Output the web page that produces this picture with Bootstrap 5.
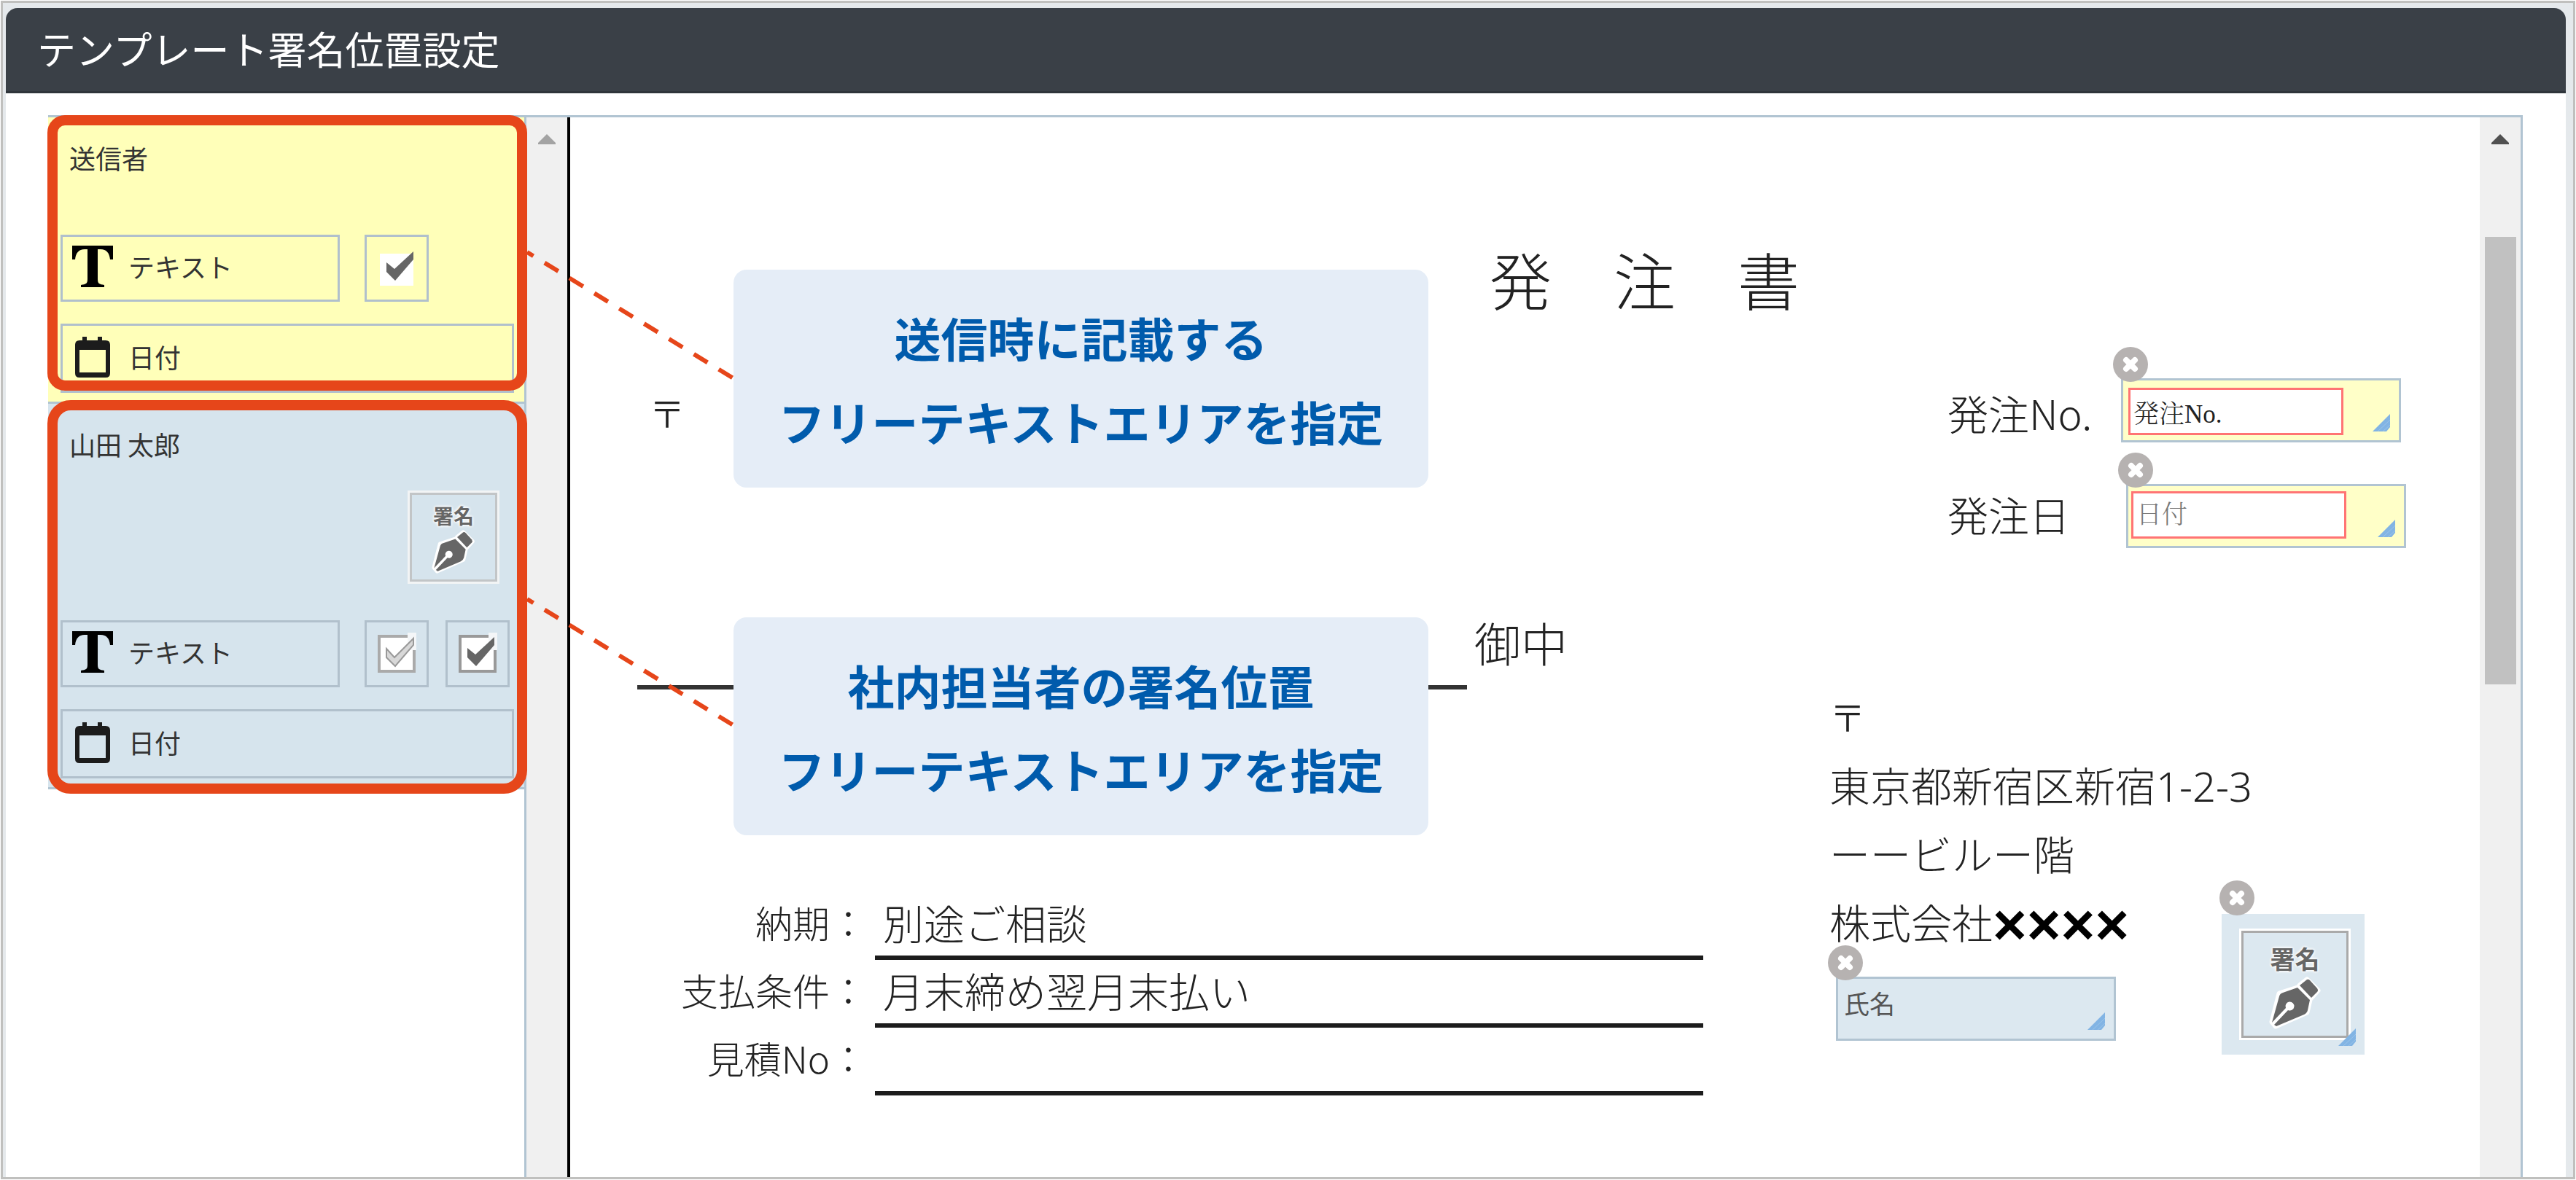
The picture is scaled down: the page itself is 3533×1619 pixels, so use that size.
<!DOCTYPE html>
<html lang="ja">
<head>
<meta charset="utf-8">
<meta name="viewport" content="width=device-width, initial-scale=1">
<title>テンプレート署名位置設定</title>
<link rel="stylesheet" href="https://cdn.jsdelivr.net/npm/bootstrap@5.3.0/dist/css/bootstrap.min.css">
<style>
  body { font-family: "Noto Sans CJK JP", sans-serif; padding: 1px; background: #fff; color: #333; }
  .app-frame { border: 3px solid #c0c0be; background: #e5e9ec; padding: 7px 10px 0 4px; }
  .app-title { background: #3a4047; border-bottom: 3px solid #2f353b; border-radius: 16px 16px 0 0; height: 117px; padding: 0 43px 4px; }
  .app-title h1 { font-size: 53px; line-height: 80px; color: #fff; }
  .app-main { background: #fff; padding: 30px 59px 0 58px; }
  .workspace { border-top: 3px solid #b1c4d2; border-right: 3px solid #b1c4d2; }

  /* palette */
  .palette { width: 716px; border-right: 4px solid #000; }
  .palette-list { border-right: 3px solid #b1c4d2; }
  .signer { padding: 28px 14px 12px 17px; border-bottom: 3px solid #b1c4d2; }
  .signer h2 { font-size: 36px; line-height: 54px; padding-left: 12px; }
  .signer-send { background: #ffffb9; }
  .signer-staff { background: #d6e4ed; }
  .tile { border: 3px solid #b1c0cc; background: transparent; color: #333; font-size: 36px; line-height: 54px; padding: 0 12px 6px; height: 92px; }
  .tile svg { width: 58px; height: 60px; margin-right: 20px; }
  .tile-text { width: 383px; }
  .tile-date { height: 95px; }
  .tile-check { width: 88px; padding: 0; }
  .tile-check svg { width: 54px; height: 58px; margin: 0; }
  .tiles-send { margin-top: 79px; }
  .tiles-staff { margin-top: 50px; }
  .tiles-gap { gap: 34px; }
  .checks-gap { gap: 23px; }
  .date-gap { margin-top: 30px; }
  .sign-tile { width: 126px; height: 128px; border: 3px solid #f2f4f5; outline: 3px solid #c2c5c7; outline-offset: -6px; background: transparent; color: #666; font-size: 28px; line-height: 40px; font-weight: 700; padding: 0; margin: 37px 20px 0 0; text-shadow: 0 0 4px #fff, 0 0 4px #fff, 0 0 3px #fff; }
  .sign-tile svg { width: 60px; height: 60px; }

  /* scroll bars */
  .track { background: #f0f0f0; }
  .track-doc { width: 56px; }
  .track button { border: 0; background: transparent; padding: 23px 0 0; line-height: 14px; height: 37px; }
  .track svg { display: block; width: 26px; height: 14px; }
  .thumb { width: 43px; height: 614px; margin-top: 127px; background: #c1c1c1; }

  /* order form */
  .sheet { padding-top: 157px; font-weight: 300; color: #222; }
  .sheet h2 { font-size: 85px; line-height: 128px; font-weight: 300; margin: 0 0 50px 1261px; }
  .sheet-left { padding-left: 92px; }
  .sheet-right { width: 892px; font-size: 56px; line-height: 94px; }
  .postal { font-size: 50px; line-height: 139px; padding-left: 16px; }
  .order-rows { line-height: 139px; padding-left: 162px; }
  .addressee { gap: 10px; margin-top: 191px; font-size: 64px; line-height: 108px; height: 120px; }
  .addressee-line { width: 1138px; border-bottom: 6px solid #333; }
  .terms { margin-top: 278px; border-collapse: separate; border-spacing: 0; }
  .terms th { width: 326px; height: 93px; padding: 0 11px 11px 0; font-size: 51px; font-weight: 300; line-height: 80px; text-align: right; }
  .terms td { width: 1136px; padding: 0 11px 5px; font-size: 56px; line-height: 80px; border-bottom: 6px solid #1c1c1c; }
  .address { margin-top: 161px; }
  .address .mark-sign { font-size: 50px; }
  .latin { font-family: "Noto Sans", sans-serif; line-height: 60px; }
  .cross { font-family: "Liberation Sans", sans-serif; font-size: 80px; line-height: 40px; font-weight: 700; color: #000; vertical-align: -8px; }

  /* fields dropped on the form */
  .field { position: absolute; width: 384px; height: 88px; border: 3px solid #b1c4d2; }
  .field-send { background: #ffffc8; }
  .field-staff { background: #dce8f0; }
  .field input { width: 295px; height: 65px; border: 3px solid #ff7474; border-radius: 0; padding: 0 4px; font-family: "Liberation Serif", "Noto Serif CJK JP", "Noto Sans CJK JP", serif; font-size: 35px; font-weight: 300; color: #222; background: #fff; }
  .field input::placeholder { color: #777; opacity: 1; }
  .field .plain { width: 340px; height: 64px; border: 0; background: transparent; font-family: "Noto Sans CJK JP", sans-serif; font-weight: 400; color: #555; }
  .field .close-dot { position: absolute; left: -14px; top: -46px; }
  .close-dot { width: 48px; height: 48px; border: 0; background: transparent; padding: 0; line-height: 0; }
  .close-dot svg { width: 48px; height: 48px; }
  .grip { position: absolute; right: 12px; bottom: 12px; width: 24px; height: 24px; }
  .field-no { left: 2127px; top: 358px; padding: 10px 0 0 7px; }
  .field-day { left: 2134px; top: 503px; padding: 7px 0 0 4px; }
  .field-name { left: 1736px; top: 1179px; }
  .field-sign { left: 2265px; top: 1093px; width: 196px; height: 193px; border: 0; }
  .field-sign .sign-tile { width: 153px; height: 153px; margin: 20px 0 0 24px; font-size: 34px; line-height: 50px; outline-color: #aaa; border-color: #fff; background: #dce8f0; }
  .field-sign .sign-tile svg { width: 72px; height: 72px; }
  .field-sign .close-dot { left: -3px; }

  /* explanation layer */
  .notes { position: absolute; inset: 0; pointer-events: none; }
  .ring { position: absolute; left: -1px; width: 658px; border: 14px solid #e6461a; }
  .ring-send { top: -3px; height: 378px; border-radius: 24px; }
  .ring-staff { top: 388px; height: 540px; border-radius: 32px; }
  .leads { position: absolute; left: 657px; top: 183px; width: 286px; height: 656px; overflow: visible; }
  .callout { position: absolute; left: 940px; width: 953px; padding: 35px 0 34px; border-radius: 18px; background: #e5edf7; color: #005bac; font-size: 64px; line-height: 115px; font-weight: 700; text-align: center; }
  .callout-send { top: 209px; }
  .callout-staff { top: 686px; }
</style>
<script src="https://cdn.jsdelivr.net/npm/bootstrap@5.3.0/dist/js/bootstrap.bundle.min.js"></script>
</head>
<body class="min-vh-100 d-flex">

<svg class="d-none" aria-hidden="true">
  <symbol id="i-text" viewBox="0 0 58 60">
    <path d="M1 2H57V21H53C52 12 48 7 40 7H36V48C36 54 38 55 45 56V59H13V56C20 55 22 54 22 48V7H18C10 7 6 12 5 21H1Z" fill="#000"/>
  </symbol>
  <symbol id="i-calendar" viewBox="0 0 58 60">
    <path d="M15 3h6v5h15V3h6v5h5q6 0 6 6v39q0 6-6 6H11q-6 0-6-6V14q0-6 6-6h4zM11 21v31h36V21z" fill="#1c1c1c" fill-rule="evenodd"/>
  </symbol>
  <symbol id="i-check-solid" viewBox="0 0 54 58">
    <path d="M4 9H50V53H4Z" fill="#fff"/>
    <path d="M13 21L24 30L50 6V17L25 46L13 34Z" fill="#666"/>
  </symbol>
  <symbol id="i-check-box" viewBox="0 0 54 58">
    <path d="M3 5H51V53H3Z" fill="#fff" stroke="#999" stroke-width="4"/>
    <path d="M42 0H54V24H42Z" fill="#f4f6f8"/>
    <path d="M13 21L24 30L50 6V17L25 46L13 34Z" fill="#666"/>
  </symbol>
  <symbol id="i-check-line" viewBox="0 0 54 58">
    <path d="M3 5H51V53H3Z" fill="#fff" stroke="#aaa" stroke-width="4"/>
    <path d="M42 0H54V24H42Z" fill="#f4f6f8"/>
    <path d="M13 22L24 34L50 8V17L25 46L13 34Z" fill="#d8d8d8" stroke="#999" stroke-width="2"/>
  </symbol>
  <symbol id="i-pen" viewBox="-3 -3 72 72">
    <g stroke="#fff" stroke-width="7" stroke-linejoin="round" fill="#fff">
      <path d="M49 1L64 16L55 26L39 9Z"/><path d="M36 12L53 29L49 46L6 65L1 59L11 20Z"/>
    </g>
    <path d="M49 1Q51 0 53 2L63 13Q65 16 63 18L55 26L39 9Z" fill="#666"/>
    <path d="M36 12L53 29L50 43Q49 47 45 49L7 65L4 63L23 43A6 6 0 1 0 20 40L1 60L11 24Q12 20 16 19Z" fill="#666"/>
  </symbol>
  <symbol id="i-close" viewBox="0 0 48 48">
    <circle cx="24" cy="24" r="24" fill="#b6b2b1"/>
    <path d="M18 18L30 30M30 18L18 30" stroke="#fff" stroke-width="8" stroke-linecap="round"/>
  </symbol>
  <symbol id="i-grip" viewBox="0 0 24 24">
    <path d="M24 0V18L19 24H0Z" fill="#82b4e4"/>
    <path d="M7 24L24 8M14 24L24 15" stroke="#9cc4e8" stroke-width="1"/>
  </symbol>
  <symbol id="i-up" viewBox="0 0 26 14"><path d="M13 0L25 12V14H1V12Z" fill="currentColor"/></symbol>
</svg>

<div class="app-frame flex-grow-1 d-flex flex-column">
  <header class="app-title d-flex align-items-center"><h1 class="m-0 fw-normal">テンプレート署名位置設定</h1></header>

  <main class="app-main flex-grow-1 d-flex">
    <div class="workspace position-relative flex-grow-1 d-flex">

      <aside class="palette d-flex flex-shrink-0">
        <div class="palette-list flex-grow-1">
          <section class="signer signer-send">
            <h2 class="m-0 fw-normal">送信者</h2>
            <div class="tiles-send tiles-gap d-flex">
              <button type="button" class="tile tile-text d-flex align-items-center"><svg aria-hidden="true"><use href="#i-text"/></svg>テキスト</button>
              <button type="button" class="tile tile-check d-flex align-items-center justify-content-center" aria-label="チェック"><svg><use href="#i-check-solid"/></svg></button>
            </div>
            <button type="button" class="tile tile-date date-gap w-100 d-flex align-items-center"><svg aria-hidden="true"><use href="#i-calendar"/></svg>日付</button>
          </section>
          <section class="signer signer-staff">
            <h2 class="m-0 fw-normal">山田 太郎</h2>
            <div class="d-flex justify-content-end">
              <button type="button" class="sign-tile d-flex flex-column align-items-center justify-content-center">署名<svg aria-hidden="true"><use href="#i-pen"/></svg></button>
            </div>
            <div class="tiles-staff tiles-gap d-flex">
              <button type="button" class="tile tile-text d-flex align-items-center"><svg aria-hidden="true"><use href="#i-text"/></svg>テキスト</button>
              <div class="checks-gap d-flex">
                <button type="button" class="tile tile-check d-flex align-items-center justify-content-center" aria-label="チェック（任意）"><svg><use href="#i-check-line"/></svg></button>
                <button type="button" class="tile tile-check d-flex align-items-center justify-content-center" aria-label="チェック（必須）"><svg><use href="#i-check-box"/></svg></button>
              </div>
            </div>
            <button type="button" class="tile tile-date date-gap w-100 d-flex align-items-center"><svg aria-hidden="true"><use href="#i-calendar"/></svg>日付</button>
          </section>
        </div>
        <div class="track track-doc flex-shrink-0 d-flex flex-column align-items-center">
          <button type="button" aria-label="上へ"><svg color="#a3a3a3"><use href="#i-up"/></svg></button>
        </div>
      </aside>

      <article class="position-relative flex-grow-1">
        <div class="sheet">
          <h2>発　注　書</h2>
          <div class="d-flex">
            <div class="sheet-left flex-grow-1">
              <div class="postal">〒</div>
              <div class="addressee d-flex">
                <div class="addressee-line"></div>
                <div>御中</div>
              </div>
              <table class="terms">
                <tr><th scope="row">納期：</th><td>別途ご相談</td></tr>
                <tr><th scope="row">支払条件：</th><td>月末締め翌月末払い</td></tr>
                <tr><th scope="row">見積No：</th><td></td></tr>
              </table>
            </div>
            <div class="sheet-right flex-shrink-0">
              <div class="order-rows">
                <label class="d-block" for="order-no">発注No.</label>
                <label class="d-block" for="order-day">発注日</label>
              </div>
              <address class="address mb-0">
                <div class="mark-sign">〒</div>
                <div>東京都新宿区新宿<span class="latin">1-2-3</span></div>
                <div>ーービルー階</div>
                <div>株式会社<span class="cross">××××</span></div>
              </address>
            </div>
          </div>
        </div>

        <div class="field field-send field-no">
          <input class="d-block" id="order-no" type="text" value="発注No.">
          <button type="button" class="close-dot" aria-label="削除"><svg><use href="#i-close"/></svg></button>
          <svg class="grip" aria-hidden="true"><use href="#i-grip"/></svg>
        </div>
        <div class="field field-send field-day">
          <input class="d-block" id="order-day" type="text" placeholder="日付">
          <button type="button" class="close-dot" aria-label="削除"><svg><use href="#i-close"/></svg></button>
          <svg class="grip" aria-hidden="true"><use href="#i-grip"/></svg>
        </div>
        <div class="field field-staff field-name">
          <input class="plain d-block px-2" type="text" value="氏名" aria-label="氏名">
          <button type="button" class="close-dot" aria-label="削除"><svg><use href="#i-close"/></svg></button>
          <svg class="grip" aria-hidden="true"><use href="#i-grip"/></svg>
        </div>
        <div class="field field-staff field-sign">
          <button type="button" class="sign-tile d-flex flex-column align-items-center justify-content-center">署名<svg aria-hidden="true"><use href="#i-pen"/></svg></button>
          <button type="button" class="close-dot" aria-label="削除"><svg><use href="#i-close"/></svg></button>
          <svg class="grip" aria-hidden="true"><use href="#i-grip"/></svg>
        </div>
      </article>

      <div class="track track-doc flex-shrink-0 d-flex flex-column align-items-center">
        <button type="button" aria-label="上へ"><svg color="#505050"><use href="#i-up"/></svg></button>
        <div class="thumb"></div>
      </div>

      <div class="notes">
        <div class="ring ring-send"></div>
        <div class="ring ring-staff"></div>
        <svg class="leads" aria-hidden="true">
          <path d="M0 2L286 177M0 478L286 653" stroke="#e6461a" stroke-width="6" stroke-dasharray="22 18" stroke-dashoffset="12" fill="none"/>
        </svg>
        <div class="callout callout-send">送信時に記載する<br>フリーテキストエリアを指定</div>
        <div class="callout callout-staff">社内担当者の署名位置<br>フリーテキストエリアを指定</div>
      </div>
    </div>
  </main>
</div>
</body>
</html>
